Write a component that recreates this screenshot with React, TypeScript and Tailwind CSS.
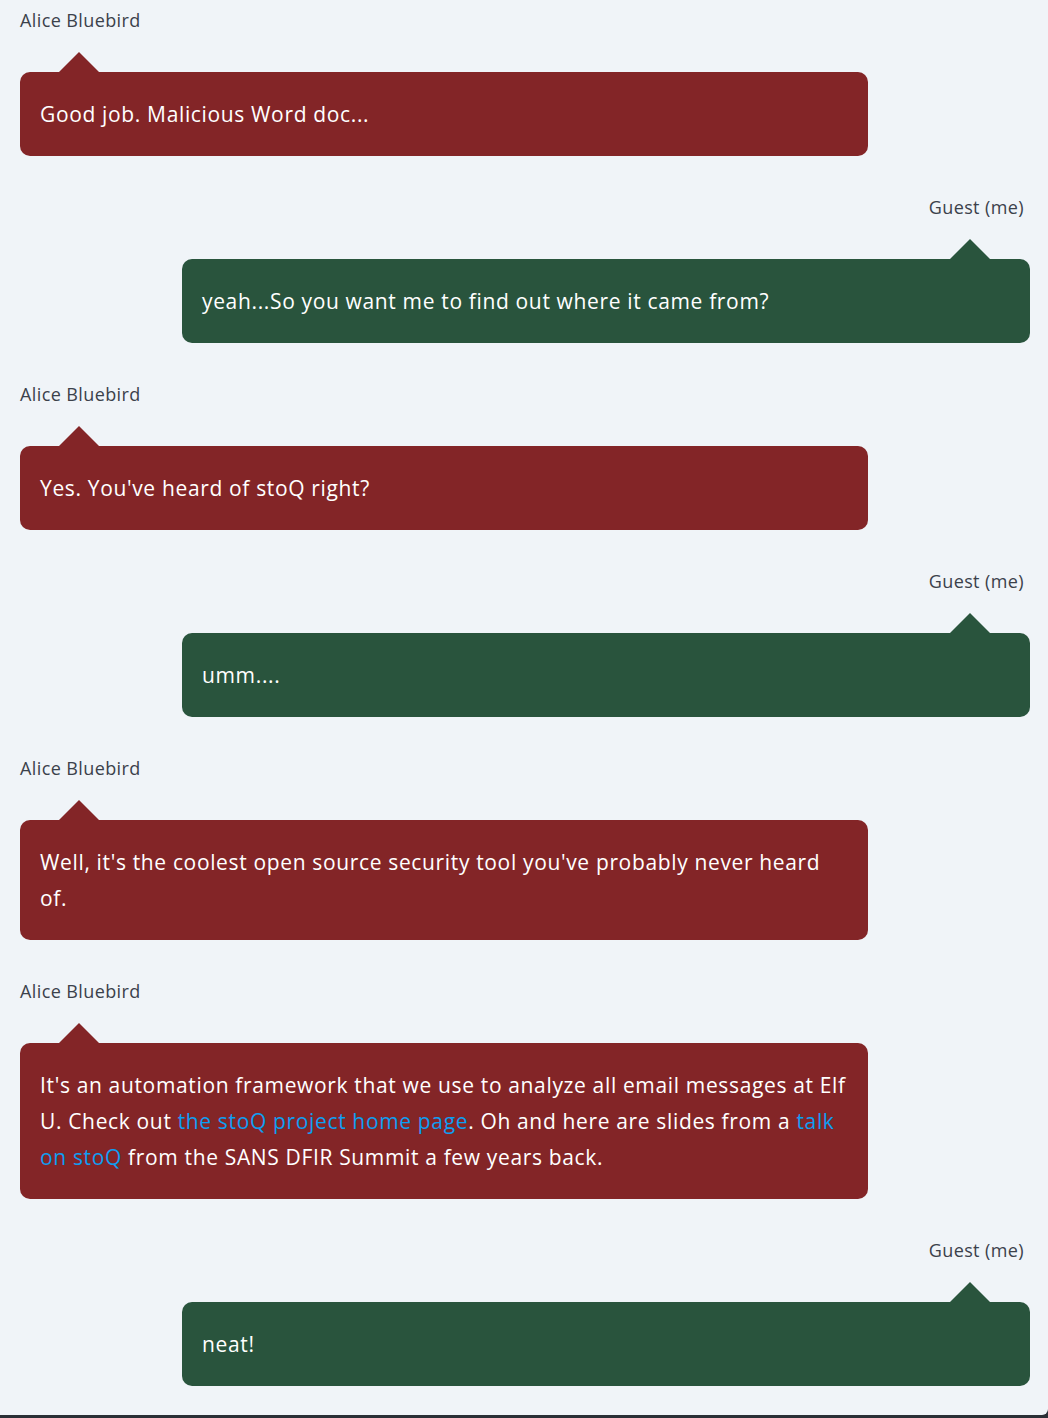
import React from 'react';

type Msg = {
  from: 'alice' | 'me';
  body: React.ReactNode;
};

const link = 'text-[#0d9ef2]';

const messages: Msg[] = [
  { from: 'alice', body: 'Good job. Malicious Word doc...' },
  { from: 'me', body: 'yeah...So you want me to find out where it came from?' },
  { from: 'alice', body: "Yes. You've heard of stoQ right?" },
  { from: 'me', body: 'umm....' },
  {
    from: 'alice',
    body: "Well, it's the coolest open source security tool you've probably never heard of.",
  },
  {
    from: 'alice',
    body: (
      <>
        It's an automation framework that we use to analyze all email messages at Elf U. Check out{' '}
        <a className={link}>the stoQ project home page</a>. Oh and here are slides from a{' '}
        <a className={link}>talk on stoQ</a> from the SANS DFIR Summit a few years back.
      </>
    ),
  },
  { from: 'me', body: 'neat!' },
];

function Bubble({ msg }: { msg: Msg }) {
  const isMe = msg.from === 'me';
  return (
    <div className={isMe ? 'flex flex-col items-end' : 'flex flex-col items-start'}>
      <div
        className={
          'h-6 leading-6 text-[18px] tracking-[0.4px] text-[#3b414b] ' + (isMe ? 'pr-[6px]' : 'pl-0')
        }
      >
        {isMe ? 'Guest (me)' : 'Alice Bluebird'}
      </div>
      <div
        className={
          'relative mt-10 w-[848px] rounded-[10px] px-5 py-6 text-[21px] leading-9 tracking-[0.65px] text-white ' +
          (isMe ? 'bg-[#29543d]' : 'bg-[#832527]')
        }
      >
        {/* little pointer above the bubble */}
        <span
          className={
            'absolute -top-5 h-0 w-0 border-x-[20px] border-b-[20px] border-x-transparent ' +
            (isMe ? 'right-10 border-b-[#29543d]' : 'left-[39px] border-b-[#832527]')
          }
        />
        {msg.body}
      </div>
    </div>
  );
}

export default function App() {
  return (
    <div className="h-[1418px] bg-[#2a2f36]" style={{ fontFamily: '"Open Sans", Lato, sans-serif' }}>
      <div className="flex h-[1415px] flex-col gap-[39px] rounded-br-[6px] bg-[#f0f4f8] pl-5 pr-[18px] pt-2">
        {messages.map((m, i) => (
          <Bubble key={i} msg={m} />
        ))}
      </div>
    </div>
  );
}
